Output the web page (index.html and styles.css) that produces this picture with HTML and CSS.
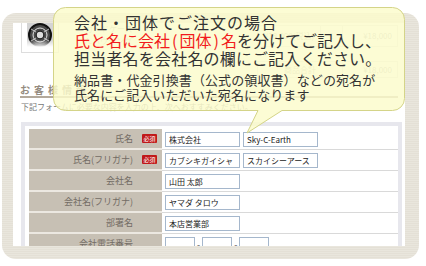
FILE: index.html
```html
<!DOCTYPE html>
<html lang="ja">

<head>
    <meta charset="UTF-8">
    <meta name="viewport" content="width=device-width, initial-scale=1.0">
    <title>お客様情報 - ご注文手続き</title>
    <link rel="stylesheet" href="styles.css">
</head>

<body>
    <div class="frame">
        <div class="panel">
            <!-- ordered item (faded, under the callout) -->
            <div class="order">
                <div class="thumb">
                    <svg width="26" height="24" viewBox="0 0 26 24">
                        <defs>
                            <linearGradient id="fade" x1="0" y1="0" x2="0" y2="1">
                                <stop offset="0" stop-color="#fff" stop-opacity="0" />
                                <stop offset="0.7" stop-color="#fff" stop-opacity="0" />
                                <stop offset="1" stop-color="#fff" stop-opacity="1" />
                            </linearGradient>
                        </defs>
                        <rect width="26" height="24" fill="#d4d4d4" />
                        <circle cx="13" cy="12" r="11" fill="#4a4a4a" stroke="#111" stroke-width="2" />
                        <circle cx="13" cy="12" r="7" fill="none" stroke="#e6e6e6" stroke-width="1" />
                        <circle cx="13" cy="12" r="3.8" fill="#ddd" stroke="#222" stroke-width="1.2" />
                        <path d="M4 6 L9 9 M22 6 L17 9 M4 18 L9 15 M22 18 L17 15" stroke="#bbb" stroke-width="1" />
                        <rect width="26" height="24" fill="url(#fade)" />
                    </svg>
                </div>
                <div class="product">
                    <p class="product-name">ガードケース</p>
                    <p class="product-opt">A.ハウジング</p>
                </div>
                <div class="order-table">
                    <div class="cell">¥18,000(税込)</div>
                    <div class="cell">1</div>
                    <div class="cell cell-sum">¥18,000</div>
                    <div class="cell cell-total">商品合計</div>
                    <div class="cell cell-sum">¥18,000</div>
                </div>
            </div>

            <h2 class="section-title">お客様情報</h2>
            <p class="section-note">下記フォームに必要な内容を入力の上、次へおすすみください。</p>

            <div class="form-box">
                <div class="form-row">
                    <div class="label"><span class="label-text">氏名</span><span class="req">必須</span></div>
                    <div class="value">
                        <input type="text" value="株式会社">
                        <input type="text" value="Sky-C-Earth">
                    </div>
                </div>
                <div class="form-row">
                    <div class="label"><span class="label-text">氏名(フリガナ)</span><span class="req">必須</span></div>
                    <div class="value">
                        <input type="text" value="カブシキガイシャ">
                        <input type="text" value="スカイシーアース">
                    </div>
                </div>
                <div class="form-row">
                    <div class="label"><span class="label-text">会社名</span></div>
                    <div class="value"><input type="text" value="山田 太郎"></div>
                </div>
                <div class="form-row">
                    <div class="label"><span class="label-text">会社名(フリガナ)</span></div>
                    <div class="value"><input type="text" value="ヤマダ タロウ"></div>
                </div>
                <div class="form-row">
                    <div class="label"><span class="label-text">部署名</span></div>
                    <div class="value"><input type="text" value="本店営業部"></div>
                </div>
                <div class="form-row">
                    <div class="label"><span class="label-text">会社電話番号</span></div>
                    <div class="value">
                        <input type="text" class="tel">
                        <span class="dash">-</span>
                        <input type="text" class="tel">
                        <span class="dash">-</span>
                        <input type="text" class="tel">
                    </div>
                </div>
            </div>
        </div>
    </div>

    <!-- speech bubble over the form -->
    <div class="callout">
        <svg class="bubble" width="352" height="127" viewBox="0 0 352 127">
            <path d="M12.5,0.5 H339.5 A12,12 0 0 1 351.5,12.5 V91.5 A12,12 0 0 1 339.5,103.5 H229 L194,126 L205,103.5 H12.5 A12,12 0 0 1 0.5,91.5 V12.5 A12,12 0 0 1 12.5,0.5 Z"
                fill="#fbfbcc" fill-opacity="0.84" stroke="#d4d488" stroke-width="1" />
        </svg>
        <div class="callout-text">
            <p class="lead lead-first">会社・団体でご注文の場合</p>
            <p class="lead lead-red"><span class="red">氏と名に会社<span class="paren">(</span>団体<span class="paren">)</span>名</span>を分けてご記入し、</p>
            <p class="lead">担当者名を会社名の欄にご記入ください。</p>
            <p class="sub">納品書・代金引換書（公式の領収書）などの宛名が</p>
            <p class="sub">氏名にご記入いただいた宛名になります</p>
        </div>
    </div>
</body>

</html>
```

FILE: styles.css
```css
:root {
    --frame-color: #e4e0d6;
    --frame-stripe: #e9e6dd;
    --label-bg: #c7c0b4;
    --label-line: #ece8e1;
    --label-text: #736c64;
    --input-border: #a5b7cc;
    --bubble-text: #333333;
    --bubble-red: #f21c1c;
}

body {
    font-family: "Noto Sans CJK JP", "Noto Sans", sans-serif;
    margin: 0;
    background-color: #ffffff;
    color: #333333;
    position: relative;
}

p,
h2 {
    margin: 0;
}

.frame {
    width: 417px;
    height: 246px;
    margin: 13px 0 0 2px;
    padding: 10px 14px 13px 11px;
    box-sizing: border-box;
    border-radius: 14px;
    background: repeating-linear-gradient(var(--frame-color) 0 1px, var(--frame-stripe) 1px 2px);
}

.panel {
    height: 223px;
    background-color: #ffffff;
    overflow: hidden;
}

/* ordered item */
.order {
    height: 58px;
    display: flex;
    align-items: flex-start;
}

.thumb {
    margin-left: 8px;
    width: 38px;
    height: 30px;
    padding: 0 5px;
    box-sizing: border-box;
    border: 1px solid #dddddd;
    border-top: none;
}

.thumb svg {
    display: block;
}

.product {
    margin-left: 26px;
    font-size: 8px;
    line-height: 12px;
    color: #b5b5b5;
}

.order-table {
    margin: 2px 7px 0 auto;
    display: grid;
    grid-template-columns: 63px 22px 55px;
    row-gap: 14px;
}

.cell {
    height: 20px;
    border: 1px solid #e4e4e4;
    margin-left: -1px;
    font-size: 8px;
    line-height: 20px;
    color: #b0b0b0;
    text-align: center;
}

.cell-sum {
    text-align: right;
    padding-right: 5px;
}

.cell-total {
    grid-column: span 2;
    height: 15px;
    line-height: 15px;
}

.cell-total + .cell-sum {
    height: 15px;
    line-height: 15px;
}

/* section heading */
.section-title {
    margin: 2px 7px 0;
    font-size: 10px;
    line-height: 13px;
    font-weight: bold;
    letter-spacing: 4px;
    color: #948b80;
    border-bottom: 2px solid #b3a99b;
}

.section-note {
    margin: 4px 7px 0 8px;
    font-size: 8px;
    line-height: 10px;
    color: #777777;
}

/* form */
.form-box {
    margin: 10px 3px 0 8px;
    padding: 3px 0 0 4px;
    border: 4px solid #e7e7ed;
    border-bottom: none;
}

.form-row {
    display: grid;
    grid-template-columns: 133px 1fr;
}

.label {
    height: 19px;
    display: grid;
    grid-template-columns: 1fr 29px;
    align-items: center;
    background-color: var(--label-bg);
    border-bottom: 2px solid var(--label-line);
    font-size: 9px;
    color: var(--label-text);
}

.label-text {
    grid-column: 1;
    text-align: right;
}

.req {
    margin-left: 9px;
    width: 15px;
    height: 9px;
    background-color: #c01818;
    border-radius: 1px;
    color: #ffffff;
    font-size: 6px;
    line-height: 9px;
    text-align: center;
}

.value {
    height: 20px;
    display: flex;
    align-items: center;
    gap: 3px;
    padding-left: 3px;
    border-bottom: 1px solid #d9d9d9;
}

.value input {
    width: 75px;
    height: 15px;
    margin: 0;
    padding: 0 3px;
    box-sizing: border-box;
    border: 1px solid var(--input-border);
    font-family: "Noto Sans CJK JP", sans-serif;
    font-size: 8px;
    color: #222222;
    background-color: #ffffff;
}

.value input.tel {
    width: 30px;
}

.dash {
    font-size: 9px;
    color: #555555;
    margin: 0 -1px;
}

/* callout */
.callout {
    position: absolute;
    left: 53px;
    top: 7px;
    width: 352px;
    height: 127px;
}

.bubble {
    position: absolute;
    top: 0;
    left: 0;
}

.callout-text {
    position: relative;
    padding: 6px 0 0 21px;
    color: var(--bubble-text);
    white-space: nowrap;
}

.lead {
    font-size: 16px;
    line-height: 18px;
    letter-spacing: 0.2px;
}

.lead-first {
    letter-spacing: 1px;
}

.lead-red {
    letter-spacing: 0;
}

.paren {
    margin: 0 2px;
}

.red {
    color: var(--bubble-red);
}

.sub {
    font-size: 13px;
    line-height: 15px;
    letter-spacing: 0.1px;
}

.lead + .sub {
    margin-top: 5px;
}
```
